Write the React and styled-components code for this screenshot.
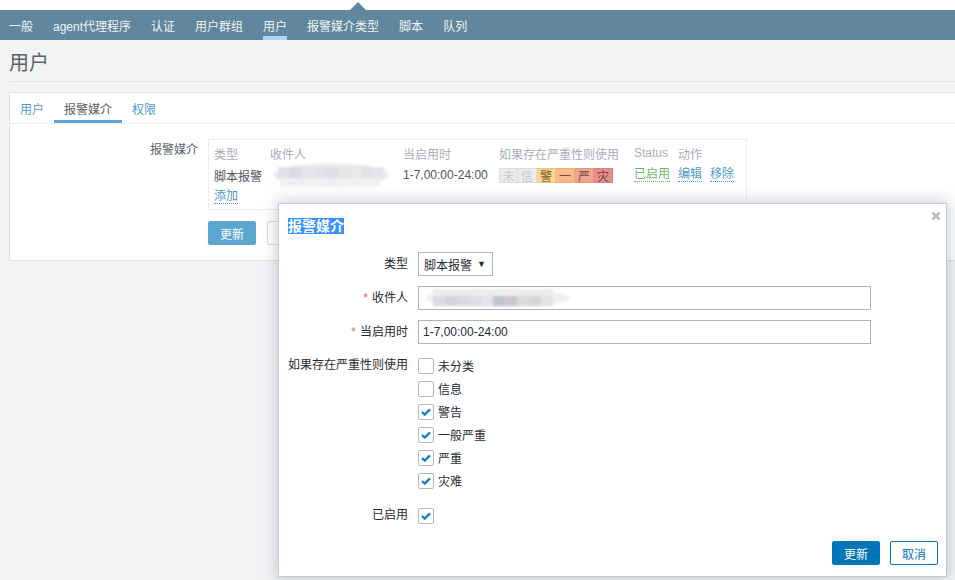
import React from 'react';
import styled, { createGlobalStyle } from 'styled-components';

const GlobalStyle = createGlobalStyle`
  html, body {
    margin: 0;
    padding: 0;
  }
  body {
    background: #f2f3f5;
    font-family: "Liberation Sans", Arial, "Noto Sans CJK SC", sans-serif;
    font-size: 12px;
    color: #4e565b;
    overflow: hidden;
  }
`;

const Page = styled.div`
  position: relative;
  width: 955px;
  height: 580px;
  overflow: hidden;
`;

const TopStrip = styled.div`
  position: relative;
  height: 10px;
  background: #fff;

  &::after {
    content: '';
    position: absolute;
    left: 350px;
    bottom: 0;
    border-left: 8px solid transparent;
    border-right: 8px solid transparent;
    border-bottom: 8px solid #60879e;
  }
`;

const Nav = styled.nav`
  display: flex;
  align-items: stretch;
  gap: 20px;
  height: 30px;
  padding-left: 9px;
  background: #60879e;
`;

const NavItem = styled.span`
  display: flex;
  align-items: center;
  box-sizing: border-box;
  padding-top: 1px;
  color: #f1f4f6;
  border-bottom: 4px solid ${p => (p.$active ? '#a9d6f0' : 'transparent')};
  border-top: 4px solid transparent;
`;

const Main = styled.main`
  padding-left: 9px;
`;

const Header = styled.header`
  display: flex;
  align-items: center;
  height: 41px;
  border-bottom: 1px solid #e2e5e8;
`;

const Title = styled.h1`
  margin: 2px 0 0;
  font-size: 20px;
  font-weight: normal;
  color: #5a6267;
`;

const Panel = styled.section`
  margin-top: 10px;
  background: #fff;
  border: 1px solid #dfe4e7;
  border-right: none;
`;

const Tabs = styled.div`
  display: flex;
  height: 30px;
  border-bottom: 1px solid #ebeef0;
`;

const Tab = styled.span`
  display: flex;
  align-items: center;
  box-sizing: border-box;
  padding: 0 10px;
  color: ${p => (p.$active ? '#565e63' : '#4f9bcd')};
  border-bottom: 3px solid ${p => (p.$active ? '#5ba4d1' : 'transparent')};
  border-top: 3px solid transparent;
`;

const PanelBody = styled.div`
  padding: 15px 0 15px;
`;

const FormRow = styled.div`
  display: grid;
  grid-template-columns: 188px auto;
  column-gap: 10px;
  align-items: start;
`;

const RowLabel = styled.div`
  text-align: right;
  line-height: 14px;
  padding-top: 4px;
  color: #5b6368;
`;

const MediaTable = styled.div`
  display: grid;
  grid-template-columns: 56px 133px 96px 135px 44px auto;
  grid-auto-rows: 22px;
  align-items: center;
  width: 539px;
  box-sizing: border-box;
  padding: 2px 0 1px 5px;
  border: 1px solid #ebeef0;
`;

const HeadCell = styled.span`
  color: #a6afb4;
`;

const Cell = styled.span`
  color: #4e565b;
  display: flex;
  align-items: center;
  gap: 8px;
`;

const Link = styled.span`
  color: ${p => p.$color || '#4f9bcd'};
  border-bottom: 1px dotted ${p => p.$color || '#4f9bcd'};
  line-height: 13px;
`;

const SeverityBar = styled.span`
  display: flex;
`;

const SevBox = styled.span`
  width: 19px;
  height: 15px;
  box-sizing: border-box;
  display: flex;
  align-items: center;
  justify-content: center;
  font-size: 12px;
  background: ${p => p.$bg};
  color: ${p => p.$fg};
  border: 1px solid ${p => p.$border};
  border-left-width: ${p => (p.$first ? '1px' : '0')};
`;

const ButtonRow = styled.div`
  display: flex;
  gap: 11px;
  margin: 11px 0 0 198px;
`;

const PageButton = styled.button`
  width: 48px;
  height: 24px;
  padding: 0;
  border-radius: 2px;
  font: inherit;
  background: ${p => (p.$primary ? '#5ea6d2' : '#fff')};
  color: ${p => (p.$primary ? '#fff' : '#5ea6d2')};
  border: 1px solid ${p => (p.$primary ? '#5ea6d2' : '#d3dadf')};
`;

const Dialog = styled.div`
  position: absolute;
  left: 278px;
  top: 203px;
  width: 669px;
  height: 374px;
  box-sizing: border-box;
  display: flex;
  flex-direction: column;
  background: #fff;
  border: 1px solid #c6ced3;
  box-shadow: 0 0 14px 2px rgba(70, 95, 110, 0.28);
`;

const CloseButton = styled.span`
  position: absolute;
  top: 7px;
  right: 5px;
  width: 10px;
  height: 10px;
  display: flex;
`;

const DialogHead = styled.div`
  padding: 14px 9px 0;
  height: 16px;
`;

const DialogTitle = styled.h4`
  display: inline;
  margin: 0;
  font-size: 14px;
  line-height: 16px;
  font-weight: bold;
  color: #fff;
  background: #3392ff;
`;

const DialogForm = styled.div`
  display: grid;
  grid-template-columns: 129px 1fr;
  column-gap: 10px;
  row-gap: 10px;
  margin-top: 18px;
  align-items: start;
`;

const FieldLabel = styled.label`
  text-align: right;
  line-height: ${p => p.$lh || '24px'};
  color: #1f2c33;
  margin-top: ${p => p.$mt || '0'};
`;

const Req = styled.span`
  color: #e4685a;
  margin-right: 4px;
`;

const Select = styled.div`
  display: flex;
  align-items: center;
  justify-content: space-between;
  width: 75px;
  height: 24px;
  box-sizing: border-box;
  padding: 0 6px 0 5px;
  border: 1px solid #a9b7bf;
  color: #1f2c33;

  span:last-child {
    font-size: 9px;
  }
`;

const Input = styled.div`
  display: flex;
  align-items: center;
  width: 453px;
  height: 24px;
  box-sizing: border-box;
  padding: 0 4px;
  border: 1px solid #a9b7bf;
  color: #1f2c33;
`;

const CheckList = styled.div`
  display: flex;
  flex-direction: column;
  margin-top: ${p => p.$mt || '0'};
`;

const CheckRow = styled.div`
  display: flex;
  align-items: center;
  gap: 4px;
  height: 23px;
  color: #1f2c33;
`;

const Box = styled.span`
  width: 16px;
  height: 16px;
  box-sizing: border-box;
  display: flex;
  align-items: center;
  justify-content: center;
  border: 1px solid #acbbc2;
  border-radius: 2px;
  background: #fff;
`;

const DialogFooter = styled.div`
  margin-top: auto;
  display: flex;
  justify-content: flex-end;
  gap: 10px;
  padding: 0 8px 11px;
`;

const DialogButton = styled.button`
  width: 48px;
  height: 24px;
  padding: 0;
  border-radius: 2px;
  font: inherit;
  background: ${p => (p.$primary ? '#0275b8' : '#fff')};
  color: ${p => (p.$primary ? '#fff' : '#0275b8')};
  border: 1px solid #0275b8;
`;

function Mosaic({ width, height, blocks }) {
  const id = `blur${width}${height}`;
  return (
    <svg width={width} height={height} style={{ display: 'block' }}>
      <defs>
        <filter id={id} x="-10%" y="-30%" width="120%" height="160%">
          <feGaussianBlur stdDeviation="1.2" />
        </filter>
      </defs>
      <g filter={`url(#${id})`}>
        <ellipse cx={width / 2} cy={height / 2} rx={width / 2 - 3} ry={height / 2 - 2} fill="#eceef0" />
        {blocks.map((b, i) => (
          <rect key={i} x={b[0]} y={b[1]} width={b[2]} height={b[3]} fill={b[4]} />
        ))}
      </g>
    </svg>
  );
}

const tableBlocks = [
  [8, 6, 12, 12, '#dfe1e4'], [20, 6, 12, 12, '#d9dbdf'], [32, 6, 12, 12, '#e4e5e8'],
  [44, 6, 12, 12, '#e0e2e5'], [56, 6, 12, 12, '#dcdee2'], [68, 6, 12, 12, '#e5e6e8'],
  [80, 6, 12, 12, '#e8e6e6'], [92, 6, 12, 12, '#e3e1e2'], [104, 6, 10, 12, '#e2e5e9'],
  [10, 17, 100, 8, '#eef0f2'],
];

const dialogBlocks = [
  [10, 9, 12, 10, '#d9dde0'], [22, 9, 12, 10, '#d2d5da'], [34, 9, 12, 10, '#d8dbdf'],
  [46, 9, 12, 10, '#dddfe2'], [58, 9, 12, 10, '#e3e5e7'], [70, 9, 12, 10, '#c1c7cd'],
  [82, 9, 12, 10, '#cdc7cb'], [94, 9, 12, 10, '#dcdcd9'], [106, 9, 12, 10, '#d5d6d8'],
  [118, 9, 12, 10, '#e1e2e3'], [10, 2, 120, 7, '#eaecee'],
];

const Check = () => (
  <svg width="10" height="8" viewBox="0 0 10 8">
    <path d="M1 4.2 L3.8 6.6 L9 1.4" fill="none" stroke="#0f7dc0" strokeWidth="2.2" />
  </svg>
);

function CheckItem({ checked, label }) {
  return (
    <CheckRow>
      <Box>{checked && <Check />}</Box>
      {label && <span>{label}</span>}
    </CheckRow>
  );
}

const navItems = ['一般', 'agent代理程序', '认证', '用户群组', '用户', '报警媒介类型', '脚本', '队列'];

const severities = [
  { t: '未', bg: '#ececed', fg: '#c3c6c8', border: '#dadcdd' },
  { t: '信', bg: '#ececed', fg: '#c3c6c8', border: '#dadcdd' },
  { t: '警', bg: '#fdd58b', fg: '#6f5a38', border: '#ecc27a' },
  { t: '一', bg: '#fdb98b', fg: '#6f5040', border: '#eda97c' },
  { t: '严', bg: '#f0a590', fg: '#6d4a43', border: '#e09482' },
  { t: '灾', bg: '#e98e8c', fg: '#6b3d3d', border: '#d87f7d' },
];

const levels = [
  ['未分类', false],
  ['信息', false],
  ['警告', true],
  ['一般严重', true],
  ['严重', true],
  ['灾难', true],
];

export default function App() {
  return (
    <Page>
      <GlobalStyle />
      <TopStrip />
      <Nav>
        {navItems.map(n => (
          <NavItem key={n} $active={n === '用户'}>{n}</NavItem>
        ))}
      </Nav>

      <Main>
        <Header>
          <Title>用户</Title>
        </Header>

        <Panel>
          <Tabs>
            <Tab>用户</Tab>
            <Tab $active>报警媒介</Tab>
            <Tab>权限</Tab>
          </Tabs>
          <PanelBody>
            <FormRow>
              <RowLabel>报警媒介</RowLabel>
              <MediaTable>
                <HeadCell>类型</HeadCell>
                <HeadCell>收件人</HeadCell>
                <HeadCell>当启用时</HeadCell>
                <HeadCell>如果存在严重性则使用</HeadCell>
                <HeadCell>Status</HeadCell>
                <HeadCell>动作</HeadCell>

                <Cell>脚本报警</Cell>
                <Cell>
                  <Mosaic width={122} height={28} blocks={tableBlocks} />
                </Cell>
                <Cell>1-7,00:00-24:00</Cell>
                <Cell>
                  <SeverityBar>
                    {severities.map((s, i) => (
                      <SevBox key={s.t} $bg={s.bg} $fg={s.fg} $border={s.border} $first={i === 0}>{s.t}</SevBox>
                    ))}
                  </SeverityBar>
                </Cell>
                <Cell><Link $color="#6cb86a">已启用</Link></Cell>
                <Cell>
                  <Link>编辑</Link>
                  <Link>移除</Link>
                </Cell>

                <Cell><Link>添加</Link></Cell>
              </MediaTable>
            </FormRow>
            <ButtonRow>
              <PageButton $primary>更新</PageButton>
              <PageButton aria-label="取消" />
            </ButtonRow>
          </PanelBody>
        </Panel>
      </Main>

      <Dialog>
        <CloseButton>
          <svg width="10" height="10" viewBox="0 0 10 10">
            <path d="M1.5 1.5 L8.5 8.5 M8.5 1.5 L1.5 8.5" stroke="#aab5bc" strokeWidth="2.4" />
          </svg>
        </CloseButton>
        <DialogHead>
          <DialogTitle>报警媒介</DialogTitle>
        </DialogHead>

        <DialogForm>
          <FieldLabel>类型</FieldLabel>
          <Select>
            <span>脚本报警</span>
            <span>▼</span>
          </Select>

          <FieldLabel><Req>*</Req>收件人</FieldLabel>
          <Input>
            <Mosaic width={150} height={22} blocks={dialogBlocks} />
          </Input>

          <FieldLabel><Req>*</Req>当启用时</FieldLabel>
          <Input>1-7,00:00-24:00</Input>

          <FieldLabel $lh="23px">如果存在严重性则使用</FieldLabel>
          <CheckList>
            {levels.map(([l, c]) => (
              <CheckItem key={l} label={l} checked={c} />
            ))}
          </CheckList>

          <FieldLabel $lh="23px" $mt="2px">已启用</FieldLabel>
          <CheckList $mt="2px">
            <CheckItem checked />
          </CheckList>
        </DialogForm>

        <DialogFooter>
          <DialogButton $primary>更新</DialogButton>
          <DialogButton>取消</DialogButton>
        </DialogFooter>
      </Dialog>
    </Page>
  );
}
